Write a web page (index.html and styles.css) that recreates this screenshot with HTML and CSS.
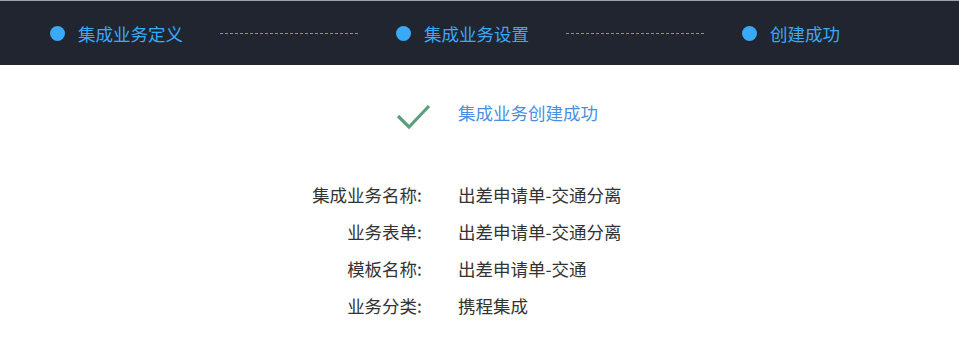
FILE: index.html
```html
<!DOCTYPE html>
<html lang="zh-CN">
<head>
  <meta charset="UTF-8" />
  <title>集成业务创建成功</title>
  <link rel="stylesheet" href="styles.css">
</head>
<body>

<header class="steps">
  <div class="step">
    <span class="dot"></span>
    <span class="step-name">集成业务定义</span>
  </div>
  <div class="line"></div>
  <div class="step">
    <span class="dot"></span>
    <span class="step-name">集成业务设置</span>
  </div>
  <div class="line"></div>
  <div class="step">
    <span class="dot"></span>
    <span class="step-name">创建成功</span>
  </div>
</header>

<main class="content">
  <!-- result -->
  <div class="result">
    <svg class="check" width="36" height="28" viewBox="0 0 36 28">
      <polyline points="2,13 13,24 33,3" fill="none" stroke="#5b9f7c" stroke-width="3.2"/>
    </svg>
    <span class="result-text">集成业务创建成功</span>
  </div>

  <!-- details -->
  <div class="details">
    <span class="label">集成业务名称:</span>
    <span class="value">出差申请单-交通分离</span>
    <span class="label">业务表单:</span>
    <span class="value">出差申请单-交通分离</span>
    <span class="label">模板名称:</span>
    <span class="value">出差申请单-交通</span>
    <span class="label">业务分类:</span>
    <span class="value">携程集成</span>
  </div>
</main>

</body>
</html>
```

FILE: styles.css
```css
body {
  margin: 0;
  font-family: "Microsoft YaHei", "Noto Sans CJK SC", "Noto Sans", sans-serif;
  background: #ffffff;
  color: #333333;
}

.steps {
  display: flex;
  align-items: center;
  height: 64px;
  padding-left: 50px;
  background: #21252f;
  border-top: 1px solid #9ba4ab;
}

.step {
  display: flex;
  align-items: center;
}

.dot {
  flex: none;
  width: 15px;
  height: 15px;
  border-radius: 50%;
  background: #3aa9f7;
  margin-right: 13px;
}

.step-name {
  font-size: 17.5px;
  color: #3aa9f7;
}

.line {
  width: 138px;
  margin: 0 38px 0 37px;
  border-top: 1px dashed #3aa9f7;
}

.content {
  padding-top: 38px;
}

.result {
  display: flex;
  align-items: center;
  margin-left: 396px;
}

.check {
  display: block;
}

.result-text {
  margin-left: 26px;
  margin-top: -9px;
  font-size: 17.5px;
  color: #4a8fe3;
}

.details {
  display: grid;
  grid-template-columns: 132px auto;
  column-gap: 36px;
  grid-auto-rows: 37px;
  align-items: center;
  margin-top: 45px;
  padding-left: 290px;
  font-size: 17.5px;
}

.label {
  text-align: right;
  color: #333333;
}

.value {
  color: #333333;
}
```
